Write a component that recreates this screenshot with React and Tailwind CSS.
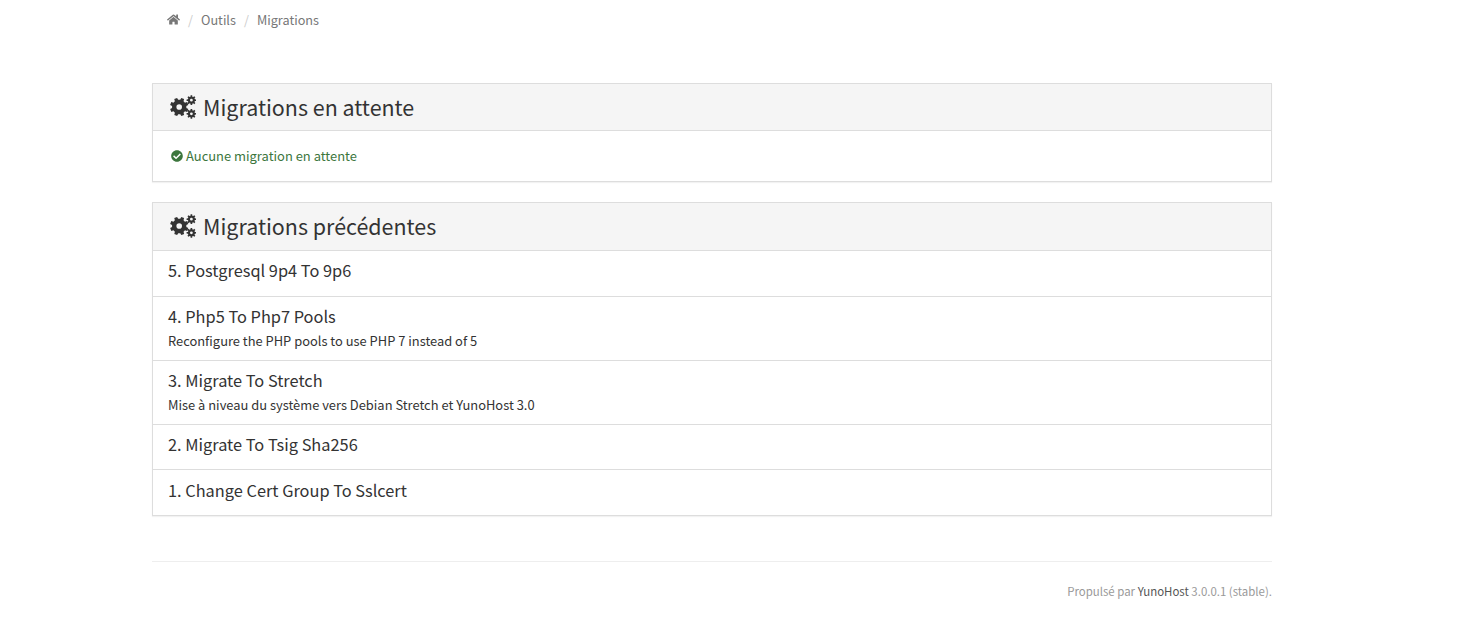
import React from "react";
import { FaHome, FaCheckCircle } from "react-icons/fa";

const font = "font-['Noto_Sans_CJK_SC','Source_Sans_Pro',sans-serif]";

function gear(cx, cy, outer, inner, hole, teeth, start) {
  const step = (Math.PI * 2) / teeth;
  const pts = [];
  for (let i = 0; i < teeth; i++) {
    const a = start + i * step;
    const w1 = step * 0.32;
    const w2 = step * 0.21;
    [[inner, a - w1], [outer, a - w2], [outer, a + w2], [inner, a + w1]].forEach(([r, t]) => {
      pts.push(`${(cx + r * Math.cos(t)).toFixed(2)} ${(cy + r * Math.sin(t)).toFixed(2)}`);
    });
  }
  const ring = `M${cx - hole} ${cy}a${hole} ${hole} 0 1 0 ${hole * 2} 0a${hole} ${hole} 0 1 0 ${-hole * 2} 0Z`;
  return `M${pts.join("L")}Z${ring}`;
}

const cogs = [
  gear(9.2, 12, 9.3, 7.2, 2.8, 8, 0.39),
  gear(21.4, 5.2, 4.9, 3.6, 1.4, 8, 0),
  gear(21.4, 18.8, 4.9, 3.6, 1.4, 8, 0),
].join("");

function CogsIcon() {
  return (
    <svg viewBox="0 0 26 24" className="w-[26px] h-[24px] mr-[7px] text-[#333]" fill="currentColor" fillRule="evenodd">
      <path d={cogs} />
    </svg>
  );
}

function Heading({ children, className }) {
  return (
    <div className={`bg-[#f5f5f5] border-b border-[#ddd] pl-[17px] flex items-center ${className}`}>
      <CogsIcon />
      <h2 className="text-[21.45px] leading-[26px] text-[#333] font-normal">{children}</h2>
    </div>
  );
}

function Row({ title, desc, className }) {
  return (
    <div className={`border-b border-[#ddd] last:border-b-0 px-[15px] ${className}`}>
      <div className="text-[16.35px] leading-[24px] text-[#333]">{title}</div>
      {desc && <div className="text-[12.9px] leading-[20px] mt-[3px] text-[#333]">{desc}</div>}
    </div>
  );
}

export default function App() {
  return (
    <div className={`${font} bg-white min-h-[636px] w-[1476px] text-[14px]`}>
      <div className="w-[1120px] ml-[152px]">
        <nav className="h-[83px] pl-[15px] pt-[10px] flex items-start text-[12.7px] leading-[20px] text-[#777]">
          <FaHome className="w-[13px] h-[13px] mt-[3px] text-[#777]" />
          <span className="text-[#ccc] mx-[8px]">/</span>
          <span>Outils</span>
          <span className="text-[#ccc] mx-[8px]">/</span>
          <span>Migrations</span>
        </nav>

        <section className="border border-[#ddd] shadow-[0_1px_1px_rgba(0,0,0,0.05)] h-[99px] mb-[20px]">
          <Heading className="h-[47px]">Migrations en attente</Heading>
          <div className="px-[18px] pt-[15px] flex items-center text-[12.95px] leading-[20px] text-[#3c763d]">
            <FaCheckCircle className="w-[12px] h-[12px] mr-[3px]" />
            <span>Aucune migration en attente</span>
          </div>
        </section>

        <section className="border border-[#ddd] shadow-[0_1px_1px_rgba(0,0,0,0.05)] h-[314px]">
          <Heading className="h-[48px] pb-[2px]">Migrations précédentes</Heading>
          <Row title="5. Postgresql 9p4 To 9p6" className="h-[46px] pt-[7px]" />
          <Row title="4. Php5 To Php7 Pools" desc="Reconfigure the PHP pools to use PHP 7 instead of 5" className="h-[64px] pt-[7px]" />
          <Row title="3. Migrate To Stretch" desc="Mise à niveau du système vers Debian Stretch et YunoHost 3.0" className="h-[64px] pt-[7px]" />
          <Row title="2. Migrate To Tsig Sha256" className="h-[45px] pt-[7px]" />
          <Row title="1. Change Cert Group To Sslcert" className="h-[45px] pt-[8px]" />
        </section>

        <footer className="mt-[45px] border-t border-[#eee] pt-[19px] text-right text-[11.45px] leading-[20px] text-[#999]">
          Propulsé par <span className="text-[#555]">YunoHost</span> 3.0.0.1 (stable).
        </footer>
      </div>
    </div>
  );
}
